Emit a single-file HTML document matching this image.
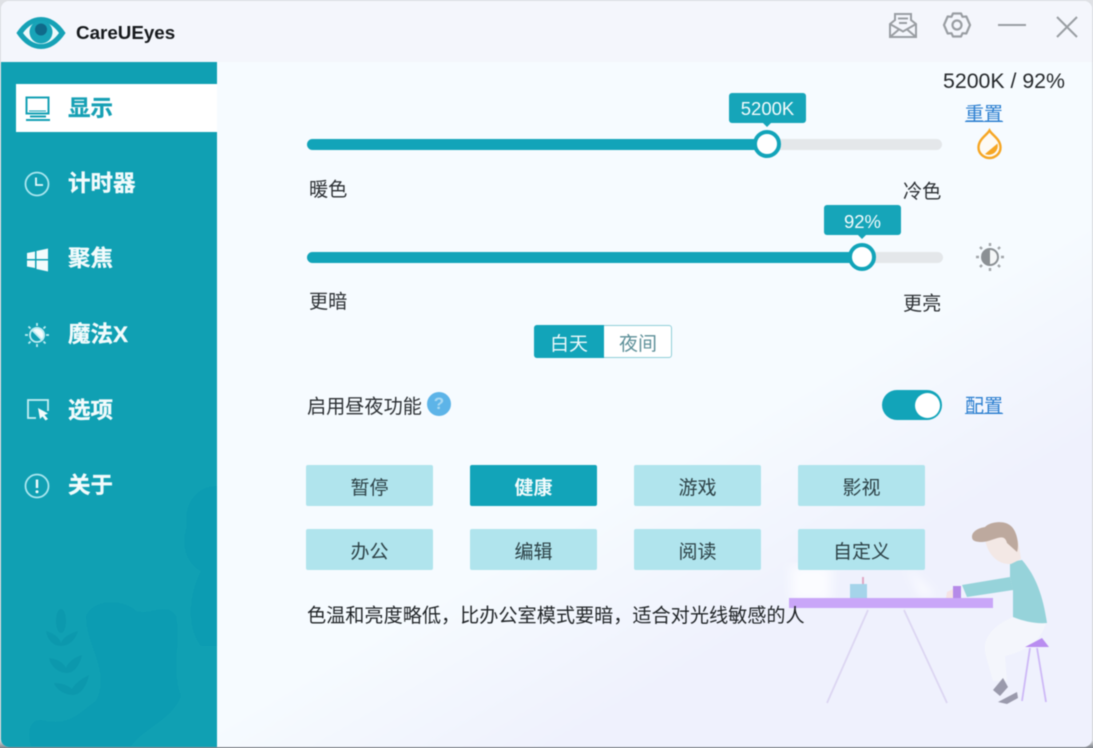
<!DOCTYPE html>
<html lang="zh-CN"><head><meta charset="utf-8"><title>CareUEyes</title>
<style>
*{box-sizing:border-box;margin:0;padding:0}
html,body{width:1093px;height:748px;overflow:hidden;background:linear-gradient(#dfe1e5 0,#d6d8dc 99%,#7f838a 100%)}
body{font-family:"Liberation Sans","Noto Sans CJK SC",sans-serif;position:relative}
#win{position:absolute;left:1px;top:1px;width:1091px;height:746px;border-radius:8px;overflow:hidden;background:linear-gradient(150deg,#f6fbff 62%,#eff1fd 78%);filter:blur(.45px)}
.a{position:absolute;white-space:nowrap}
.t{font-size:19.15px;line-height:24px;color:#2b2f33}
.nav{left:67px;font-size:22.5px;line-height:28px;font-weight:700;color:#f2fbfc;-webkit-text-stroke:.3px currentColor}
.track{height:11px;border-radius:6px;background:#e4e7ea}
.fill{height:11px;border-radius:6px;background:#12a4b9}
.knob{width:28px;height:28px;border-radius:50%;background:#fff;border:4.5px solid #12a4b9}
.tip{height:30px;border-radius:3px;background:#16a5b9;color:#f2fbfc;text-align:center;font-size:18.5px;line-height:31px;width:77px}
.tip:after{content:"";position:absolute;left:33px;top:29px;border:5px solid transparent;border-top:5px solid #16a5b9;border-bottom:0}
.btn{width:127px;height:41px;border-radius:2px;background:#b0e4ed;text-align:center;font-size:19px;line-height:47px;color:#2c4146;overflow:hidden}
.lnk{color:#2c7fd0;text-decoration:underline;font-size:19px;line-height:24px}
</style></head><body>
<div id="win">
<!-- main background -->
<svg class="a" style="left:0;top:0" width="1091" height="745" viewBox="0 0 1091 745">
<defs><filter id="b2"><feGaussianBlur stdDeviation="5"/></filter></defs>
<path d="M790 565H830V600H790ZM905 565L935 595H920Z" fill="#fbfcff" filter="url(#b2)"/>
</svg>
<!-- title bar -->
<div class="a" style="left:0;top:0;width:1091px;height:61px;background:#f4f6fc"></div>
<svg class="a" style="left:14px;top:14px" width="52" height="36" viewBox="0 0 52 36">
<path d="M2 18C8 9 16 2.500 26 2.500S44 9 50 18C44 27 36 33.500 26 33.500S8 27 2 18Z" fill="#16a2b6" stroke="#16a2b6" stroke-linejoin="round"/>
<path d="M8 18C13 11 19 7 26 7S39 11 44 18C39 25 33 29 26 29S13 25 8 18Z" fill="#eef9fb"/>
<circle cx="26" cy="17" r="11.500" fill="#18a4b8"/><circle cx="26" cy="14.500" r="6" fill="#0f6a8a"/>
</svg>
<div class="a" style="left:75px;top:19px;font-family:'Liberation Sans',sans-serif;font-weight:700;font-size:18.8px;line-height:26px;color:#16191c">CareUEyes</div>
<!-- title icons -->
<svg class="a" style="left:887px;top:11px" width="30" height="28" viewBox="0 0 30 28" fill="none" stroke="#9a9ea3" stroke-width="2">
<path d="M2 12L7 8V2H23V8L28 12V25H2Z"/><path d="M2 12L15 19.500L28 12M2 25L11.500 17M28 25L18.500 17M10 6.500H20M11 11H19"/>
</svg>
<svg class="a" style="left:941px;top:10px" width="30" height="28" viewBox="0 0 30 28" fill="none" stroke="#9a9ea3" stroke-width="2.200">
<path d="M11 2.500H19L20.500 5.800L24.300 5.500L28 14L24.300 22.500L20.500 22.200L19 25.500H11L9.500 22.200L5.700 22.500L2 14L5.700 5.500L9.500 5.800Z" stroke-linejoin="round"/><circle cx="15" cy="14" r="4.500"/>
</svg>
<div class="a" style="left:997px;top:23px;width:28px;height:2px;background:#9a9ea3"></div>
<svg class="a" style="left:1054px;top:14px" width="24" height="24" viewBox="0 0 24 24" stroke="#9a9ea3" stroke-width="2"><path d="M2 2L22 22M22 2L2 22"/></svg>
<!-- sidebar -->
<div class="a" style="left:0;top:61px;width:216px;height:685px;background:#10a0b3"></div>
<svg class="a" style="left:0;top:480px" width="216" height="265" viewBox="0 0 216 265">
<g fill="#0b9bb2" opacity=".75"><path d="M85 135C95 115 125 120 135 130C150 135 165 120 175 135C180 160 170 190 180 215C170 240 145 245 130 265H30C25 250 30 235 45 240C70 245 80 230 95 220C110 190 85 165 85 135Z"/>
<path d="M216 5C195 5 182 25 186 45C178 70 190 85 200 90C185 120 188 150 200 165H216Z"/></g>
<g fill="#0b94aa" opacity=".6"><ellipse cx="60" cy="140" rx="5" ry="12"/><path d="M60 165C52 165 46 158 45 150C52 152 58 156 60 162C62 156 70 152 77 150C75 158 68 165 60 165ZM66 192C58 192 50 186 48 177C56 178 62 181 65 187C67 181 74 176 81 174C79 184 73 192 66 192ZM72 214C63 214 55 208 53 202C60 202 67 204 71 208C74 202 82 197 88 194C86 204 80 214 72 214Z"/></g>
</svg>
<div class="a" style="left:15px;top:83px;width:201px;height:48px;background:#fff"></div>
<svg class="a" style="left:24px;top:95px" width="26" height="26" viewBox="0 0 26 26" fill="none" stroke="#14a0b4" stroke-width="2"><rect x="1.500" y="1.500" width="22" height="16"/><path d="M5 20.500H21M1 24H25"/><path d="M4 15H21" stroke-width="1"/></svg>
<div class="a nav" style="top:94px;color:#16a0b4">显示</div>
<svg class="a" style="left:23px;top:170px" width="26" height="26" viewBox="0 0 26 26" fill="none" stroke="#a9e6ef" stroke-width="1.800"><circle cx="13" cy="13" r="11.500"/><path d="M12 6.500V14H19" stroke="#e6f9fb"/></svg>
<div class="a nav" style="top:169px">计时器</div>
<svg class="a" style="left:25px;top:247px" width="24" height="24" viewBox="0 0 24 24" fill="#f2fbfc"><path d="M1 5L9 3.500V11H1ZM10.500 3L22 .5V11H10.500ZM1 12.500H9V20L1 18.500ZM10.500 12.500H22V23.500L10.500 21Z"/></svg>
<div class="a nav" style="top:244px">聚焦</div>
<svg class="a" style="left:23px;top:321px" width="26" height="26" viewBox="0 0 26 26" fill="none" stroke="#bdecf2" stroke-width="1.800"><circle cx="13" cy="13" r="7"/><path d="M8 8L18 18A7 7 0 0 0 8 8Z" fill="#f2fbfc"/><path d="M13 1V4M13 22V25M1 13H4M22 13H25M4.500 4.500L6.500 6.500M19.500 19.500L21.500 21.500M4.500 21.500L6.500 19.500M19.500 6.500L21.500 4.500"/></svg>
<div class="a nav" style="top:320px">魔法X</div>
<svg class="a" style="left:25px;top:397px" width="24" height="24" viewBox="0 0 24 24" fill="none" stroke="#c4eef3" stroke-width="1.800"><path d="M10 20H2V2H22V13"/><path d="M12 10L22 15.500L18.500 17L22 21L19.500 22.500L16.500 18.500L14 21Z" fill="#f2fbfc" stroke="none"/></svg>
<div class="a nav" style="top:396px">选项</div>
<svg class="a" style="left:23px;top:472px" width="26" height="26" viewBox="0 0 26 26" fill="none" stroke="#a9e6ef" stroke-width="1.800"><circle cx="13" cy="13" r="11.500"/><path d="M13 6.500V15" stroke="#f2fbfc" stroke-width="2.400"/><circle cx="13" cy="18.800" r="1.500" fill="#f2fbfc" stroke="none"/></svg>
<div class="a nav" style="top:471px">关于</div>
<!-- right top -->
<div class="a" style="left:942px;top:67px;font-size:21.3px;line-height:26px;color:#26292c">5200K / 92%</div>
<div class="a lnk" style="left:964px;top:102px">重置</div>
<svg class="a" style="left:975px;top:127px" width="27" height="33" viewBox="0 0 27 33"><path d="M13.500 2.500C11 7 2.500 11 2.500 19.500A11 10.500 0 0 0 24.500 19.500C24.500 11 16 7 13.500 2.500Z" fill="#fdfaf4" stroke="#f6a623" stroke-width="2.400"/><path d="M21.500 15.500L9 26A9 9 0 0 0 21.500 15.500Z" fill="#f6a623"/></svg>
<!-- sliders -->
<div class="a track" style="left:306px;top:138px;width:635px"></div>
<div class="a fill" style="left:306px;top:138px;width:460px"></div>
<div class="a knob" style="left:752px;top:129px"></div>
<div class="a tip" style="left:728px;top:92px">5200K</div>
<div class="a t" style="left:308px;top:178px">暖色</div>
<div class="a t" style="left:902px;top:180px">冷色</div>
<div class="a track" style="left:306px;top:251px;width:636px"></div>
<div class="a fill" style="left:306px;top:251px;width:555px"></div>
<div class="a knob" style="left:847px;top:242px"></div>
<div class="a tip" style="left:823px;top:204px;line-height:33px">92%</div>
<svg class="a" style="left:974px;top:241px" width="30" height="30" viewBox="0 0 30 30"><circle cx="15" cy="15" r="8" fill="#f5f7f8" stroke="#8b9094" stroke-width="2"/><path d="M15 7A8 8 0 0 0 15 23Z" fill="#8b9094"/><path d="M15 1V4M15 26V29M1 15H4M26 15H29M5 5L7 7M23 23L25 25M5 25L7 23M23 7L25 5" stroke="#a2a6aa" stroke-width="2.400"/></svg>
<div class="a t" style="left:308px;top:290px">更暗</div>
<div class="a t" style="left:902px;top:292px">更亮</div>
<!-- day night -->
<div class="a" style="left:533px;top:324px;width:138px;height:33px;border:1px solid #8fced8;border-radius:3px;background:#fff"></div>
<div class="a" style="left:533px;top:324px;width:70px;height:33px;background:#12a4b9;border-radius:3px 0 0 3px;color:#eefafc;font-size:19px;line-height:36px;text-align:center;padding-top:2px;overflow:hidden">白天</div>
<div class="a" style="left:603px;top:324px;width:68px;height:33px;color:#5c8f98;font-size:19px;line-height:36px;text-align:center;padding-top:2px;overflow:hidden">夜间</div>
<!-- toggle -->
<div class="a t" style="left:306px;top:395px">启用昼夜功能</div>
<div class="a" style="left:426px;top:391px;width:24px;height:24px;border-radius:50%;background:#5db4e8;color:#a9d9f2;font-size:17px;font-weight:700;line-height:24px;text-align:center">?</div>
<div class="a" style="left:881px;top:389px;width:60px;height:30px;border-radius:15px;background:#12a4b9"></div>
<div class="a" style="left:914px;top:392px;width:25px;height:25px;border-radius:50%;background:#fff"></div>
<div class="a lnk" style="left:964px;top:394px">配置</div>
<!-- buttons -->
<div class="a btn" style="left:305px;top:464px">暂停</div>
<div class="a btn" style="left:469px;top:464px;background:#12a4b9;color:#f2fbfc;font-weight:700">健康</div>
<div class="a btn" style="left:633px;top:464px">游戏</div>
<div class="a btn" style="left:797px;top:464px">影视</div>
<div class="a btn" style="left:305px;top:528px">办公</div>
<div class="a btn" style="left:469px;top:528px">编辑</div>
<div class="a btn" style="left:633px;top:528px">阅读</div>
<div class="a btn" style="left:797px;top:528px">自定义</div>
<!-- illustration -->
<svg class="a" style="left:0;top:0" width="1091" height="745" viewBox="0 0 1091 745">
<path d="M849 583H866V597H849Z" fill="#a5d4ea"/><path d="M861 576H863V583H861Z" fill="#e0a8c4"/>
<path d="M788 597H992V607H788Z" fill="#c9a6f8"/>
<path d="M952 585H960V597H952Z" fill="#b58ae8"/>
<path d="M867 609L826 702M903 609L946 702" stroke="#dcd6f2" stroke-width="1.800" fill="none"/>
<path d="M1012 616C990 625 980 640 985 655L992 680L1006 680L1004 655C1025 650 1040 640 1045 622Z" fill="#f4f6fc"/>
<path d="M1009 561L1021 559C1035 575 1042 595 1046 622C1034 623 1022 620 1012 616L1012 590L1009 576Z" fill="#96d3da"/>
<path d="M1009 576L961 584L966 596L1012 589Z" fill="#96d3da"/>
<path d="M946 591L952 588V597H945Z" fill="#f5e3e4"/>
<path d="M984 538C986 552 996 564 1010 563L1020 558L1017 540L1005 528Z" fill="#f3e8e5"/>
<path d="M971 536C971 530 978 527 984 526C990 520 1005 519 1011 526C1017 533 1018 545 1016 551L1006 542C1003 530 992 541 981 541C975 541 971 540 971 536Z" fill="#bda99e"/>
<path d="M1024 646L1041 637L1048 646Z" fill="#b98df0"/>
<path d="M1029 647L1021 700M1036 647L1045 701" stroke="#cdb8f6" stroke-width="1.800" fill="none"/>
<path d="M992 689L1002 677L1007 686L999 695Z" fill="#9a9aac"/><path d="M997 701L1016 691L1017 697L1006 703Z" fill="#9a9aac"/>
</svg>
<div class="a" style="left:306px;top:604px;font-size:19.15px;line-height:24px;color:#1f2326">色温和亮度略低，比办公室模式要暗，适合对光线敏感的人</div>
</div>
</body></html>
